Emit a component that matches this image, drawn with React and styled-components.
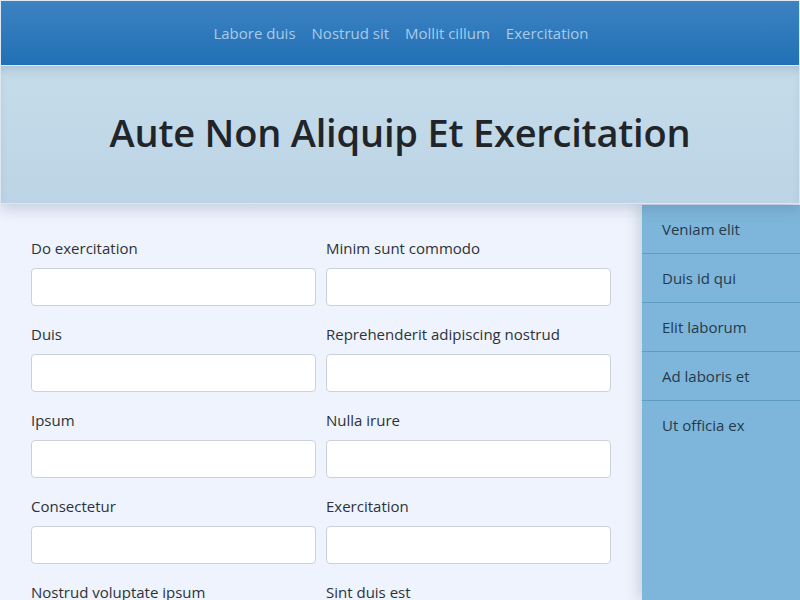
import styled, { createGlobalStyle } from "styled-components";

const GlobalStyle = createGlobalStyle`
  * { box-sizing: border-box; }
  body {
    margin: 0;
    font-family: "Open Sans", "Noto Sans", sans-serif;
    color: #212529;
    background: #eef3fd;
  }
`;

const navLinks = ["Labore duis", "Nostrud sit", "Mollit cillum", "Exercitation"];
const fields = [
  "Do exercitation",
  "Minim sunt commodo",
  "Duis",
  "Reprehenderit adipiscing nostrud",
  "Ipsum",
  "Nulla irure",
  "Consectetur",
  "Exercitation",
  "Nostrud voluptate ipsum",
  "Sint duis est",
];
const sideItems = ["Veniam elit", "Duis id qui", "Elit laborum", "Ad laboris et", "Ut officia ex"];

const App = () => {
  return (
    <Page>
      <GlobalStyle />
      <TopBar>
        {navLinks.map((l) => (
          <NavItem key={l} href="#">
            {l}
          </NavItem>
        ))}
      </TopBar>
      <Hero>
        <Title>Aute Non Aliquip Et Exercitation</Title>
      </Hero>
      <Main>
        <Form>
          {fields.map((f) => (
            <Field key={f}>
              <Label>{f}</Label>
              <Input type="text" />
            </Field>
          ))}
        </Form>
        <Sidebar>
          {sideItems.map((s) => (
            <SideItem key={s}>{s}</SideItem>
          ))}
        </Sidebar>
      </Main>
    </Page>
  );
};
export default App;

const Page = styled.div`
  width: 800px;
  height: 600px;
  overflow: hidden;
  display: flex;
  flex-direction: column;
`;
const TopBar = styled.nav`
  height: 65px;
  flex-shrink: 0;
  display: flex;
  align-items: center;
  justify-content: center;
  gap: 16px;
  padding-left: 2px;
  background: linear-gradient(to bottom, #3d82c1, #2170b5);
  border: 1px solid #dfe9f3;
  border-bottom: none;
  position: relative;
  z-index: 3;
`;
const NavItem = styled.a`
  color: #a8cbea;
  text-decoration: none;
  font-size: 15px;
`;
const Hero = styled.header`
  height: 139px;
  flex-shrink: 0;
  display: flex;
  align-items: center;
  justify-content: center;
  padding-bottom: 5px;
  background: linear-gradient(to bottom, #c5dcea, #bcd4e5);
  border: 1px solid #dbe6ee;
  box-shadow: 0 4px 14px rgba(60, 80, 110, 0.25), inset 0 8px 12px -6px rgba(60, 80, 110, 0.25);
  position: relative;
  z-index: 2;
`;
const Title = styled.h1`
  margin: 0;
  font-size: 38px;
  font-weight: 600;
  letter-spacing: -0.2px;
  color: #212529;
`;
const Main = styled.div`
  flex: 1;
  display: flex;
  min-height: 0;
`;
const Form = styled.form`
  width: 642px;
  padding: 33px 31px 0 31px;
  display: grid;
  grid-template-columns: 285px 285px;
  column-gap: 10px;
  row-gap: 17px;
  align-content: start;
  background: #eef3fd;
`;
const Field = styled.div`
  display: flex;
  flex-direction: column;
  gap: 9px;
`;
const Label = styled.label`
  font-size: 15px;
  line-height: 22px;
  color: #2d3238;
`;
const Input = styled.input`
  height: 38px;
  border: 1px solid #ccd1d9;
  border-radius: 4px;
  background: #fff;
  font: inherit;
`;
const Sidebar = styled.aside`
  flex: 1;
  margin-top: 1px;
  background: #7db6da;
  box-shadow: -4px 0 12px rgba(60, 80, 110, 0.2);
  position: relative;
  z-index: 1;
`;
const SideItem = styled.div`
  padding: 12px 20px;
  line-height: 24px;
  font-size: 15px;
  color: #263a4a;
  border-bottom: 1px solid #5f9cc3;

  &:last-child {
    border-bottom: none;
  }
`;
